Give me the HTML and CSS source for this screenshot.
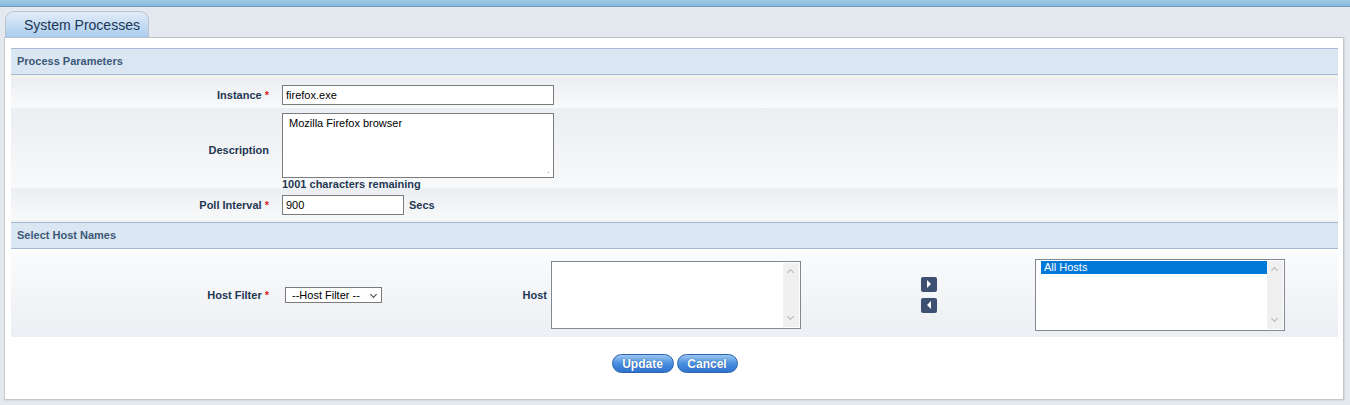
FILE: index.html
```html
<!DOCTYPE html>
<html>
<head>
<meta charset="utf-8">
<link rel="stylesheet" href="styles.css">
</head>
<body>
<div class="topbar"></div>
<div class="tabs"><div class="tab">System Processes</div></div>
<div class="panel">
  <div class="sec-head">Process Parameters</div>
  <div class="sec-body">
    <div class="row r-inst">
      <div class="lbl">Instance <span class="req">*</span></div>
      <div class="field"><input class="txt w-long" type="text" value="firefox.exe"></div>
    </div>
    <div class="row r-desc">
      <div class="lbl">Description</div>
      <div class="field col">
        <div class="ta">Mozilla Firefox browser<span class="grip"></span></div>
        <div class="remain">1001 characters remaining</div>
      </div>
    </div>
    <div class="row r-poll">
      <div class="lbl">Poll Interval <span class="req">*</span></div>
      <div class="field"><input class="txt w-short" type="text" value="900"><span class="unit">Secs</span></div>
    </div>
  </div>
  <div class="sec-head">Select Host Names</div>
  <div class="host-row">
    <div class="lbl">Host Filter <span class="req">*</span></div>
    <div class="sel">--Host Filter --<span class="chev"></span></div>
    <div class="host-lbl">Host</div>
    <div class="listbox lb-left">
      <div class="items"></div>
      <div class="sbar"><span class="up"></span><span class="dn"></span></div>
    </div>
    <div class="movers">
      <div class="mv"><svg width="6" height="8" viewBox="0 0 6 8"><path d="M1 0 L5 4 L1 8 Z" fill="#fff"/></svg></div>
      <div class="mv"><svg width="6" height="8" viewBox="0 0 6 8"><path d="M5 0 L1 4 L5 8 Z" fill="#fff"/></svg></div>
    </div>
    <div class="listbox lb-right">
      <div class="items"><div class="opt">All Hosts</div></div>
      <div class="sbar"><span class="up"></span><span class="dn"></span></div>
    </div>
  </div>
  <div class="actions">
    <button class="btn b-up">Update</button>
    <button class="btn b-cn">Cancel</button>
  </div>
</div>
</body>
</html>
```
FILE: styles.css
```css
* { box-sizing: border-box; }
html, body { margin: 0; padding: 0; }
body {
  background: #e4e9ef;
  font-family: "Liberation Sans", Arial, sans-serif;
  font-size: 11px;
  width: 1350px;
  height: 405px;
  overflow: hidden;
}
.topbar {
  height: 7px;
  background: linear-gradient(#a3cbe8, #88b7dc);
  border-bottom: 1px solid #6e9cc2;
}
.tabs { padding: 4px 0 0 5px; height: 30px; }
.tab {
  width: 144px;
  height: 26px;
  border: 1px solid #b9c3cc;
  border-bottom: none;
  border-radius: 9px 9px 0 0;
  background: linear-gradient(#e3edf8, #a9cced);
  color: #1c3656;
  font-size: 14px;
  padding: 5px 0 0 18px;
}
.panel {
  margin: 0 6px 0 4px;
  height: 363px;
  background: #fff;
  border: 1px solid #c2c7cc;
  border-top: 1px solid #b8c0c8;
  box-shadow: 1px 1px 1px #d6dbe0;
  padding: 10px 5px 0 6px;
}
.sec-head {
  height: 27px;
  background: #dbe6f3;
  border-top: 1px solid #a6b9d3;
  border-bottom: 1px solid #a6b9d3;
  color: #3b5877;
  font-weight: bold;
  font-size: 11px;
  padding: 6px 0 0 6px;
}
.sec-body {
  background: #f2f2ec;
  padding-top: 3px;
  padding-bottom: 2px;
}
.row {
  display: flex;
  align-items: center;
  background: linear-gradient(#ebeef2, #f8f9fa);
}
.r-inst { height: 30px; padding-top: 4px; }
.r-desc { height: 80px; align-items: flex-start; }
.r-poll { height: 32px; padding-top: 2px; }
.lbl {
  width: 258px;
  text-align: right;
  font-weight: bold;
  color: #1f3852;
  font-size: 11px;
}
.req { color: #d42a2a; }
.field { margin-left: 13px; display: flex; align-items: center; }
.field.col { flex-direction: column; align-items: flex-start; padding-top: 5px; }
.r-desc .lbl { align-self: center; padding-top: 3px; }
.txt {
  height: 20px;
  border: 1px solid #7c7c7c;
  font-family: "Liberation Sans", Arial, sans-serif;
  font-size: 11px;
  padding: 0 3px;
  color: #000;
  background: #fff;
  outline: none;
}
.w-long { width: 272px; }
.w-short { width: 122px; }
.unit { margin-left: 5px; font-weight: bold; color: #1f3852; }
.ta {
  position: relative;
  width: 272px;
  height: 65px;
  border: 1px solid #7c7c7c;
  background: #fff;
  padding: 3px 6px;
  font-size: 11px;
  color: #000;
}
.grip {
  position: absolute;
  right: 2px;
  bottom: 2px;
  width: 7px;
  height: 7px;
  background:
    radial-gradient(circle, #9a9a9a 0.8px, transparent 1px) 0 0 / 3px 3px;
  clip-path: polygon(100% 0, 100% 100%, 0 100%);
}
.remain { margin-top: 0; font-weight: bold; color: #1f3852; }
.host-row {
  margin-top: 3px;
  height: 85px;
  display: flex;
  align-items: center;
  background: linear-gradient(#fafbfc, #eceff3);
}
.sel {
  margin-left: 16px;
  width: 97px;
  height: 16px;
  border: 1px solid #7a7a7a;
  background: #fff;
  font-size: 11px;
  color: #000;
  padding: 1px 0 0 6px;
  position: relative;
}
.chev {
  position: absolute;
  right: 5px;
  top: 4px;
  width: 5px;
  height: 5px;
  border-right: 1px solid #444;
  border-bottom: 1px solid #444;
  transform: rotate(45deg);
}
.host-lbl {
  width: 165px;
  text-align: right;
  font-weight: bold;
  color: #1f3852;
}
.listbox {
  display: flex;
  width: 250px;
  border: 1px solid #828790;
  background: #fff;
  padding: 1px;
}
.lb-left { margin-left: 4px; height: 68px; }
.lb-right { margin-left: 98px; height: 72px; }
.items { flex: 1; }
.opt {
  background: #0078d7;
  color: #fff;
  height: 13px;
  padding: 0 0 0 3px;
  line-height: 13px;
  margin: 0 0 0 4px;
}
.sbar {
  width: 16px;
  background: #f0f0f0;
  position: relative;
}
.sbar span {
  position: absolute;
  left: 5px;
  width: 5px;
  height: 5px;
  border-left: 1px solid #b5b5b5;
  border-top: 1px solid #b5b5b5;
}
.sbar .up { top: 7px; transform: rotate(45deg); }
.sbar .dn { bottom: 8px; transform: rotate(225deg); }
.movers {
  margin-left: 120px;
  display: flex;
  flex-direction: column;
  gap: 6px;
  padding-top: 0;
}
.mv {
  width: 16px;
  height: 15px;
  background: #3e5072;
  border-radius: 2px;
  display: flex;
  align-items: center;
  justify-content: center;
}
.actions {
  display: flex;
  justify-content: center;
  gap: 3px;
  margin-top: 17px;
}
.btn {
  height: 19px;
  border: 1px solid #2b63ad;
  border-radius: 10px;
  background: linear-gradient(#9cc7f2, #4a8fe0 50%, #2f72cf);
  color: #fff;
  font-family: "Liberation Sans", Arial, sans-serif;
  font-weight: bold;
  font-size: 12px;
  padding: 0;
  text-shadow: 0 0 1px #24538f;
}
.b-up { width: 62px; }
.b-cn { width: 61px; }
```
